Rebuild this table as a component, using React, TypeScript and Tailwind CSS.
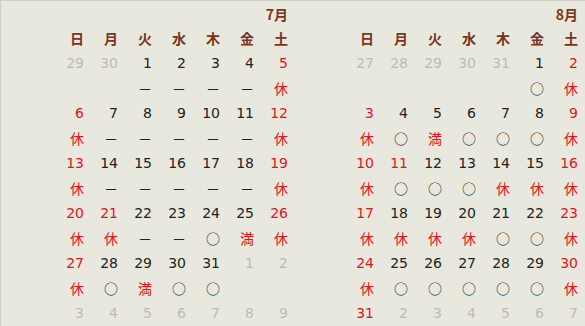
type Cell = { d: number; c?: "r" | "g"; m?: string };

const DOW = ["日", "月", "火", "水", "木", "金", "土"];

function wk(spec: string, marks: string): Cell[] {
  const ms = marks.split(",");
  return spec.split(",").map((s, i) => {
    const c = s.endsWith("r") ? "r" : s.endsWith("g") ? "g" : undefined;
    return { d: parseInt(s), c, m: ms[i] };
  });
}

const july: Cell[][] = [
  wk("29g,30g,1,2,3,4,5r", ",,－,－,－,－,休"),
  wk("6r,7,8,9,10,11,12r", "休,－,－,－,－,－,休"),
  wk("13r,14,15,16,17,18,19r", "休,－,－,－,－,－,休"),
  wk("20r,21r,22,23,24,25,26r", "休,休,－,－,○,満,休"),
  wk("27r,28,29,30,31,1g,2g", "休,○,満,○,○,,"),
  wk("3g,4g,5g,6g,7g,8g,9g", ",,,,,,"),
];

const august: Cell[][] = [
  wk("27g,28g,29g,30g,31g,1,2r", ",,,,,○,休"),
  wk("3r,4,5,6,7,8,9r", "休,○,満,○,○,○,休"),
  wk("10r,11r,12,13,14,15,16r", "休,○,○,○,休,休,休"),
  wk("17r,18,19,20,21,22,23r", "休,休,休,休,○,○,休"),
  wk("24r,25,26,27,28,29,30r", "休,○,○,○,○,○,休"),
  wk("31r,2g,3g,4g,5g,6g,7g", ",,,,,,"),
];

function numColor(c?: string) {
  if (c === "r") return "text-[#e4141b]";
  if (c === "g") return "text-[#bcbcb6]";
  return "text-[#222222]";
}

function Month({ title, weeks }: { title: string; weeks: Cell[][] }) {
  return (
    <div className="w-[290px] pr-[3px] flex justify-end">
      <div className="grid grid-cols-[repeat(7,34px)] auto-rows-[25px] leading-[25px] text-right">
        <div className="col-span-7 font-bold text-[14px] text-[#7a3420] font-['Noto_Sans_CJK_JP',sans-serif] leading-[26px]">
          {title}
        </div>
        {DOW.map((d) => (
          <div key={d} className="font-bold text-[14px] text-[#7a3420] font-['Noto_Sans_CJK_JP',sans-serif]">
            {d}
          </div>
        ))}
        {weeks.map((w, i) => (
          <div key={i} className="contents">
            {w.map((c, j) => (
              <div key={"n" + j} className={`text-[14px] font-['DejaVu_Sans',sans-serif] ${numColor(c.c)}`}>
                {c.d}
              </div>
            ))}
            {w.map((c, j) => (
              <div
                key={"m" + j}
                className={`text-[14px] font-['Noto_Sans_CJK_JP',sans-serif] ${
                  c.m === "休" || c.m === "満" ? "text-[#e4141b]" : "text-[#222222]"
                }`}
              >
                {c.m}
              </div>
            ))}
          </div>
        ))}
      </div>
    </div>
  );
}

export default function App() {
  return (
    <div className="w-[585px] h-[326px] overflow-hidden bg-[#e9e8de] border-t border-l border-[#cfcfc6] flex">
      <Month title="7月" weeks={july} />
      <Month title="8月" weeks={august} />
    </div>
  );
}
